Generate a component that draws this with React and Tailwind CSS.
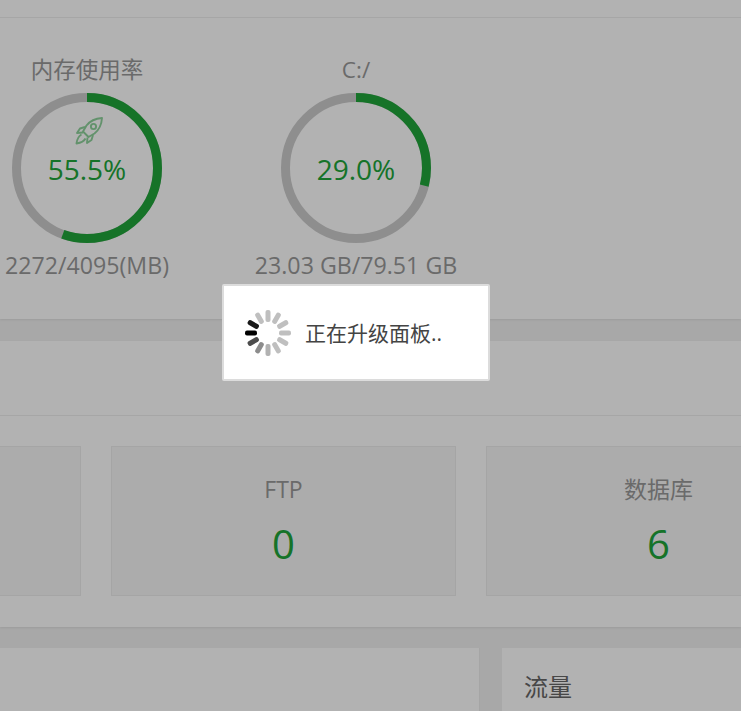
const font = { fontFamily: '"Open Sans","Noto Sans CJK SC",sans-serif' };

function Ring({ pct, value, title, sub, rocket }) {
  const r = 70.5;
  const c = 2 * Math.PI * r;
  return (
    <div className="flex w-[200px] flex-col items-center">
      <div className="h-[34px] text-[22.500px] leading-[34px] text-[#999]">{title}</div>
      <div className="relative mt-[6px] h-[150px] w-[150px]">
        <svg width="150" height="150" viewBox="0 0 150 150">
          <circle cx="75" cy="75" r={r} fill="none" stroke="#cccccc" strokeWidth="9" />
          <circle
            cx="75"
            cy="75"
            r={r}
            fill="none"
            stroke="#20a53a"
            strokeWidth="9"
            strokeDasharray={`${(c * pct) / 100} ${c}`}
            transform="rotate(-90 75 75)"
          />
        </svg>
        <div className="absolute inset-0 flex items-center justify-center pt-[2px] text-[28px] text-[#20a53a]">{value}</div>
        {rocket && (
          <svg className="absolute left-[63px] top-[24px] opacity-50 blur-[0.4px]" width="28" height="28" viewBox="0 0 28 28" fill="none" stroke="#20a53a" strokeWidth="1.9" strokeLinejoin="round">
            <path d="M27 1C20 1.500 15 4 11.500 8.500L8 14.500L13.500 20L19.500 16.500C24 13 26.500 8 27 1Z" />
            <circle cx="18.500" cy="9.500" r="2.600" />
            <path d="M10 10L5 11.500L2 16L8 15.500" />
            <path d="M18 18L16.500 23L12 26L12.500 20.500" />
            <path d="M6.500 17.500C3.500 19 2 23 1.500 26.500C5 26 9 24.500 10.500 21.500" />
          </svg>
        )}
      </div>
      <div className="mt-[7px] text-[23.200px] leading-[30px] whitespace-nowrap text-[#999]">{sub}</div>
    </div>
  );
}

function Card({ title, value }) {
  return (
    <div className="flex h-[150px] w-[345px] shrink-0 flex-col items-center border border-[#ededed] bg-[#f6f6f6] pt-[24px]">
      <div className="h-[36px] text-[23px] leading-[36px] text-[#999]">{title}</div>
      <div className="mt-[12px] text-[40px] leading-[50px] text-[#20a53a]">{value}</div>
    </div>
  );
}

function Spinner() {
  const ops = [0.25, 0.25, 0.25, 0.25, 0.25, 0.25, 0.3, 0.45, 0.7, 1, 0.9, 0.25];
  return (
    <svg className="blur-[0.6px]" width="46" height="46" viewBox="0 0 46 46">
      {ops.map((o, i) => (
        <rect
          key={i}
          x="20.500"
          y="0"
          width="5"
          height="12"
          rx="2"
          fill="#000"
          opacity={o}
          transform={`rotate(${i * 30} 23 23)`}
        />
      ))}
    </svg>
  );
}

export default function App() {
  return (
    <div className="relative h-[711px] w-[741px] overflow-hidden bg-[#f1f1f1]" style={font}>
      <section className="h-[319px] bg-white shadow-[0_1px_2px_rgba(0,0,0,0.08)]">
        <div className="h-[18px] border-b border-[#eeeeee]" />
        <div className="-ml-[13px] flex gap-[69px] pt-[35px]">
          <Ring title="内存使用率" value="55.5%" sub="2272/4095(MB)" pct={55.5} rocket />
          <Ring title="C:/" value="29.0%" sub="23.03 GB/79.51 GB" pct={29} />
        </div>
      </section>
      <section className="mt-[22px] h-[286px] bg-white shadow-[0_1px_2px_rgba(0,0,0,0.08)]">
        <div className="h-[75px] border-b border-[#eeeeee]" />
        <div className="-ml-[264px] flex gap-[30px] pt-[30px]">
          <Card title="" value="" />
          <Card title="FTP" value="0" />
          <Card title="数据库" value="6" />
        </div>
      </section>
      <section className="mt-[21px] flex h-[63px] gap-[22px]">
        <div className="w-[480px] border-r border-[#ededed] bg-white" />
        <div className="flex-1 bg-white pl-[22px] pt-[20px]">
          <div className="text-[24px] leading-[38px] text-[#666]">流量</div>
        </div>
      </section>

      <div className="absolute inset-0 bg-black/30" />

      <div className="absolute left-[222px] top-[284px] flex h-[97px] w-[268px] items-center rounded-[2px] border-2 border-[#dcdcdc] bg-white pl-[21px]">
        <Spinner />
        <span className="relative top-[1px] ml-[14px] text-[21px] text-[#444]">正在升级面板..</span>
      </div>
    </div>
  );
}
